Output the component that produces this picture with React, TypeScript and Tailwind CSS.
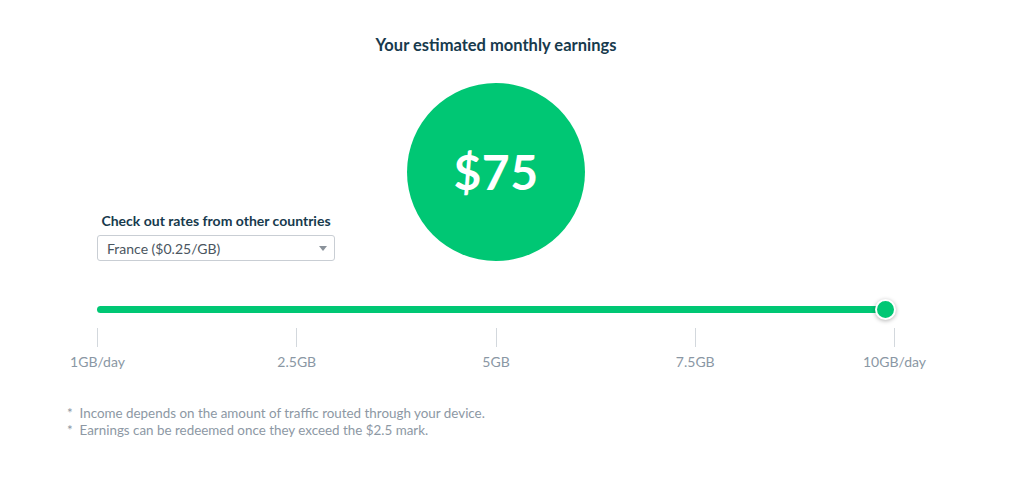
export default function App() {
  const ticks = ['1GB/day', '2.5GB', '5GB', '7.5GB', '10GB/day']

  return (
    <div className="w-[1024px] h-[486px] bg-white overflow-hidden" style={{ fontFamily: 'Lato, "Open Sans", sans-serif' }}>
      <div className="ml-[67px] w-[858px] pt-[34px]">
        <h1 className="text-center text-[16.5px] leading-[22px] font-bold text-[#173a4d]">
          Your estimated monthly earnings
        </h1>

        <div className="grid grid-cols-[1fr_178px_1fr] items-end mt-[27px]">
          <div className="pl-[30px]">
            <div className="w-[238px]">
              <div className="text-center text-[14px] leading-[18px] font-bold text-[#173a4d] mb-[5px]">
                Check out rates from other countries
              </div>
              <div className="flex items-center justify-between h-[26px] border border-[#c9ced4] rounded-[3px] pl-[9px] pr-[7px] text-[14px] text-[#4a5560]">
                <span>France ($0.25/GB)</span>
                <svg width="8" height="5" viewBox="0 0 8 5">
                  <path d="M0 0h8L4 5z" fill="#8a929a" />
                </svg>
              </div>
            </div>
          </div>
          <div className="w-[178px] h-[178px] rounded-full bg-[#00c774] flex items-center justify-center">
            <span className="text-white text-[48px] font-bold tracking-[0.5px]">$75</span>
          </div>
          <div />
        </div>

        <div className="px-[30px] mt-[45px]">
          <div className="relative w-[789px] h-[7px] rounded-full bg-[#00c774]">
            <div className="absolute right-[-10px] top-[-7px] w-[21px] h-[21px] rounded-full bg-[#00c774] border-2 border-white shadow-[0_1px_4px_rgba(0,0,0,0.3)]" />
          </div>
          <div className="flex justify-between mt-[15px]">
            {ticks.map(t => (
              <div key={t} className="w-px flex flex-col items-center">
                <div className="w-px h-[19px] bg-[#d3d8dd]" />
                <div className="mt-[6px] whitespace-nowrap text-[14px] leading-[18px] text-[#8a97a4]">{t}</div>
              </div>
            ))}
          </div>
        </div>

        <div className="mt-[34px] text-[13.4px] leading-[17px] text-[#8d98a4]">
          <div>*&nbsp; Income depends on the amount of traffic routed through your device.</div>
          <div>*&nbsp; Earnings can be redeemed once they exceed the $2.5 mark.</div>
        </div>
      </div>
    </div>
  )
}
